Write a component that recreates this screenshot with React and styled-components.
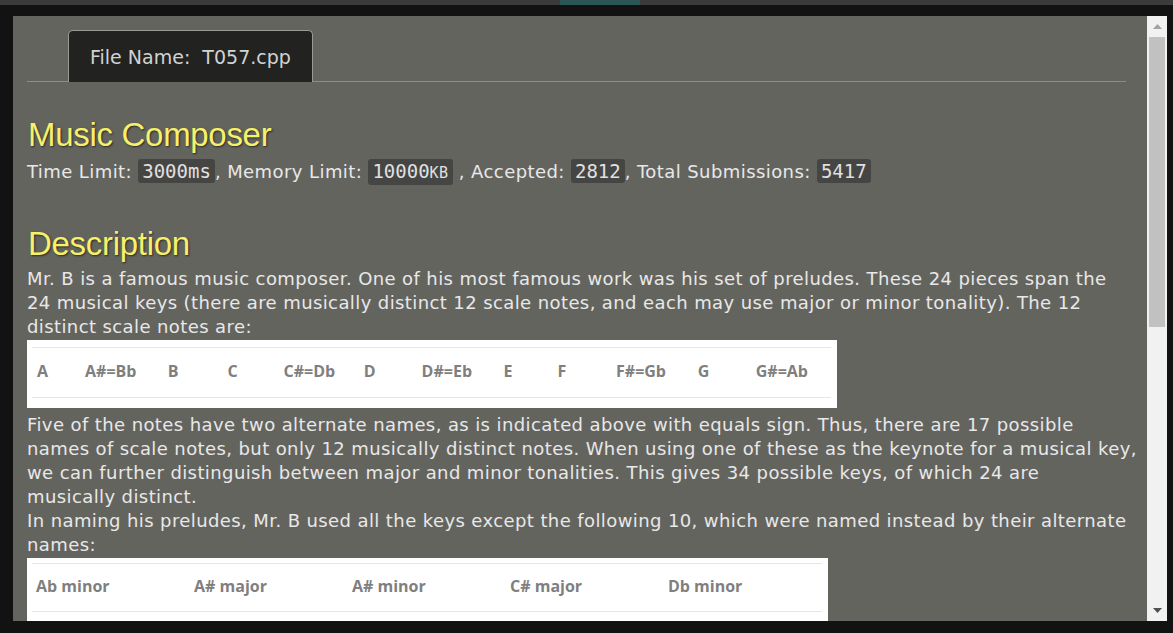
import React from "react";
import styled, { createGlobalStyle } from "styled-components";

const GlobalStyle = createGlobalStyle`
  html, body {
    margin: 0;
    padding: 0;
    background: #121212;
    overflow: hidden;
  }
`;

const Page = styled.div`
  width: 1173px;
  height: 633px;
  display: flex;
  flex-direction: column;
  background: #121212;
  overflow: hidden;
`;

const BackStrip = styled.div`
  height: 5px;
  flex-shrink: 0;
  background: linear-gradient(
    90deg,
    #3b3b3b 0px,
    #3b3b3b 560px,
    #2c5656 560px,
    #2c5656 640px,
    #3b3b3b 640px
  );
`;

const Frame = styled.div`
  flex: 1;
  display: flex;
  padding: 11px 6px 12px 13px;
  min-height: 0;
`;

const Viewport = styled.div`
  flex: 1;
  background: #64645f;
  overflow: hidden;
  padding: 14px 21px 0 14px;
  font-family: "DejaVu Sans", "Lucida Grande", sans-serif;
  color: #e8e8e8;
`;

const TabBar = styled.div`
  display: flex;
  border-bottom: 1px solid #8d8d88;
  padding-left: 41px;
`;

const Tab = styled.div`
  height: 51px;
  padding: 0 21px;
  display: flex;
  align-items: center;
  background: #222221;
  border: 1px solid #9a9a95;
  border-bottom: none;
  border-radius: 5px 5px 0 0;
  margin-bottom: -1px;
  color: #d2d2d2;
  font-size: 19px;
  white-space: pre;
`;

const Heading = styled.h1`
  margin: ${(p) => p.$top}px 0 5px 1px;
  font-family: "Liberation Sans", Arial, sans-serif;
  font-weight: 400;
  font-size: 33px;
  line-height: 36px;
  color: #f7f06a;
  text-shadow: 1px 1px 2px #2a2a2a;
  letter-spacing: -0.3px;
`;

const Stats = styled.div`
  font-size: 18px;
  line-height: 24px;
  letter-spacing: 0.42px;
  padding-top: 1px;
`;

const Code = styled.span`
  display: inline-block;
  background: #454543;
  color: #e0e0e0;
  border-radius: 3px;
  padding: 0 4px;
  font-family: "DejaVu Sans Mono", monospace;
  font-size: 19px;
  letter-spacing: 0;
  line-height: 24px;
`;

const Small = styled.span`
  font-size: 15px;
  letter-spacing: 0.5px;
`;

const Para = styled.p`
  margin: 0;
  font-size: 18px;
  line-height: 24px;
  letter-spacing: 0.4px;
  white-space: nowrap;
`;

const TableBox = styled.div`
  background: #ffffff;
  width: ${(p) => p.$w}px;
  padding: ${(p) => p.$pt}px 6px ${(p) => p.$pb}px 5px;
  margin: 1px 0 5px 0;
  box-sizing: border-box;
`;

const Table = styled.table`
  width: 100%;
  border-collapse: collapse;
  font-family: "Open Sans", sans-serif;
  font-weight: 700;
  font-size: 16px;
  color: #7f7f7f;
`;

const Cell = styled.td`
  width: ${(p) => p.$w}px;
  height: ${(p) => p.$h}px;
  padding: 0 0 4px ${(p) => p.$pl}px;
  border-top: 1px solid #e6e6e6;
  border-bottom: 1px solid #e6e6e6;
  white-space: nowrap;
`;

const Scrollbar = styled.div`
  width: 20px;
  flex-shrink: 0;
  background: #f1f1f1;
  display: flex;
  flex-direction: column;
  align-items: center;
`;

const Arrow = styled.div`
  height: 21px;
  width: 100%;
  display: flex;
  align-items: center;
  justify-content: center;
`;

const Thumb = styled.div`
  width: 16px;
  height: 290px;
  background: #c1c1c1;
`;

const Spacer = styled.div`
  flex: 1;
`;

const notes = [
  ["A", 47],
  ["A#=Bb", 81],
  ["B", 60],
  ["C", 56],
  ["C#=Db", 78],
  ["D", 58],
  ["D#=Eb", 80],
  ["E", 54],
  ["F", 59],
  ["F#=Gb", 80],
  ["G", 58],
  ["G#=Ab", 78],
];

const keys = ["Ab minor", "A# major", "A# minor", "C# major", "Db minor"];

// lines as they wrap in the original page
const intro = [
  "Mr. B is a famous music composer. One of his most famous work was his set of preludes. These 24 pieces span the",
  "24 musical keys (there are musically distinct 12 scale notes, and each may use major or minor tonality). The 12",
  "distinct scale notes are:",
];

const names = [
  "Five of the notes have two alternate names, as is indicated above with equals sign. Thus, there are 17 possible",
  "names of scale notes, but only 12 musically distinct notes. When using one of these as the keynote for a musical key,",
  "we can further distinguish between major and minor tonalities. This gives 34 possible keys, of which 24 are",
  "musically distinct.",
];

const naming = [
  "In naming his preludes, Mr. B used all the keys except the following 10, which were named instead by their alternate",
  "names:",
];

const Lines = ({ lines }) => (
  <Para>
    {lines.map((l, i) => (
      <React.Fragment key={i}>
        {i > 0 && <br />}
        {l}
      </React.Fragment>
    ))}
  </Para>
);

export default function App() {
  return (
    <Page>
      <GlobalStyle />
      <BackStrip />
      <Frame>
        <Viewport>
          <TabBar>
            <Tab>{"File Name:  T057.cpp"}</Tab>
          </TabBar>

          <Heading $top={35}>Music Composer</Heading>
          <Stats>
            Time Limit: <Code>3000ms</Code>, Memory Limit:{" "}
            <Code>
              10000<Small>KB</Small>
            </Code>{" "}
            , Accepted: <Code>2812</Code>, Total Submissions: <Code>5417</Code>
          </Stats>

          <Heading $top={41}>Description</Heading>
          <Lines lines={intro} />
          <TableBox $w={810} $pt={7} $pb={10}>
            <Table>
              <tbody>
                <tr>
                  {notes.map(([n, w]) => (
                    <Cell key={n} $w={w} $h={45} $pl={5}>
                      {n}
                    </Cell>
                  ))}
                </tr>
              </tbody>
            </Table>
          </TableBox>
          <Lines lines={names} />
          <Lines lines={naming} />
          <TableBox $w={801} $pt={5} $pb={10}>
            <Table>
              <tbody>
                <tr>
                  {keys.map((k) => (
                    <Cell key={k} $w={158} $h={43} $pl={4}>
                      {k}
                    </Cell>
                  ))}
                </tr>
              </tbody>
            </Table>
          </TableBox>
        </Viewport>
        <Scrollbar>
          <Arrow>
            <svg width="9" height="5" viewBox="0 0 9 5">
              <path d="M0 5 L4.5 0 L9 5 Z" fill="#a3a3a3" />
            </svg>
          </Arrow>
          <Thumb />
          <Spacer />
          <Arrow>
            <svg width="9" height="5" viewBox="0 0 9 5">
              <path d="M0 0 L4.5 5 L9 0 Z" fill="#505050" />
            </svg>
          </Arrow>
        </Scrollbar>
      </Frame>
    </Page>
  );
}
